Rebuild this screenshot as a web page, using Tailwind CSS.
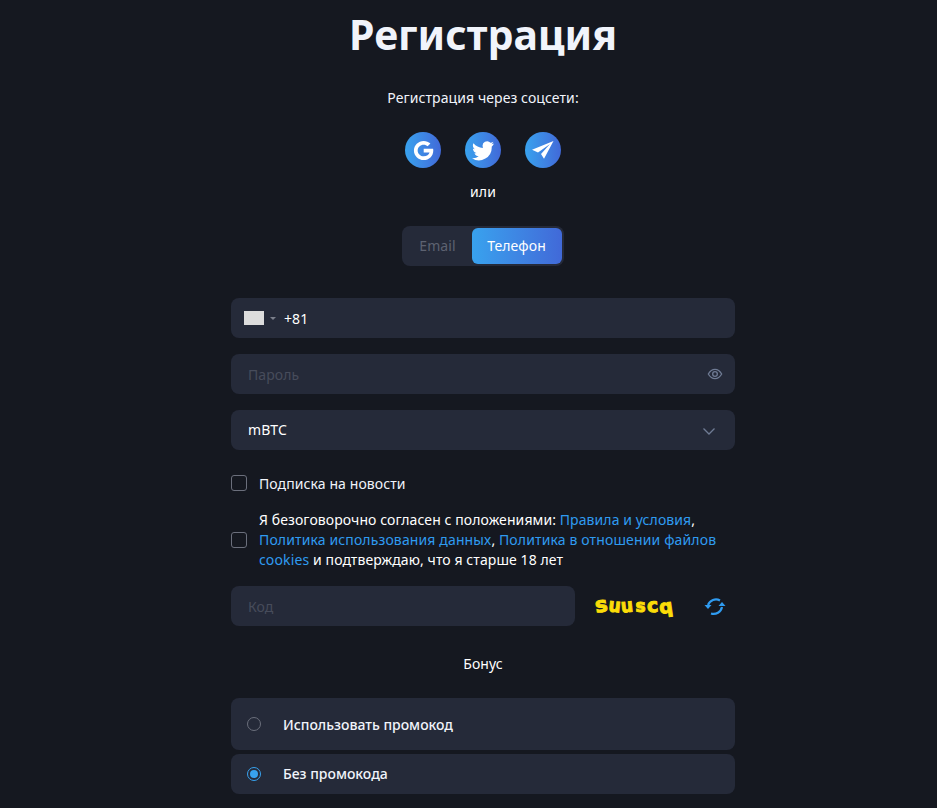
<!DOCTYPE html>
<html lang="ru">
  <head>
    <meta charset="UTF-8" />
    <meta name="viewport" content="width=device-width, initial-scale=1.0" />
    <title>Регистрация</title>
    <script src="https://cdn.jsdelivr.net/npm/@tailwindcss/browser@4"></script>
  </head>
  <body class="bg-[#151820] font-['Noto_Sans',sans-serif] text-[14px] tracking-[0.09px] text-white overflow-hidden h-[808px]">
    <div class="ml-[231px] w-[504px]">
      <!-- Header -->
      <h1 class="h-[70px] flex items-center justify-center text-[41px] tracking-normal font-bold text-[#f1f4fb]">Регистрация</h1>
      <p class="mt-[18px] h-5 leading-5 text-center text-[#f1f4fb]">Регистрация через соцсети:</p>

      <!-- Social -->
      <div class="mt-[24px] flex justify-center gap-6">
        <a class="w-9 h-9 rounded-full bg-gradient-to-r from-[#38a2ee] to-[#4169d8] flex items-center justify-center">
          <svg width="23" height="23" viewBox="0 0 24 24" fill="#fff"><path d="M12.200 10.200v3.900h6.100c-.6 2.400-2.900 4-6.100 4-3.500 0-6.300-2.800-6.300-6.100s2.800-6.100 6.300-6.100c1.600 0 3 .6 4.100 1.600l2.900-2.900C17.300 2.900 14.900 2 12.200 2 6.600 2 2 6.500 2 12s4.600 10 10.200 10c5.600 0 10-3.900 10-10 0-.6-.1-1.200-.2-1.800z"/></svg>
        </a>
        <a class="w-9 h-9 rounded-full bg-gradient-to-r from-[#38a2ee] to-[#4169d8] flex items-center justify-center">
          <svg width="24" height="24" viewBox="0 0 24 24" fill="#fff"><path d="M23 5.500c-.8.400-1.700.600-2.600.700.900-.6 1.600-1.400 2-2.500-.9.500-1.800.900-2.900 1.100A4.500 4.500 0 0 0 11.800 9c0 .4 0 .7.100 1C8.100 9.800 4.800 8 2.500 5.200c-1.200 2-.6 4.600 1.400 6-.7 0-1.400-.2-2-.6 0 2.200 1.500 4.100 3.600 4.500-.7.200-1.400.200-2 .1.600 1.800 2.200 3.100 4.200 3.100A9 9 0 0 1 1 20.200 12.800 12.800 0 0 0 20.700 8.800c.9-.8 1.700-2 2.300-3.300z"/></svg>
        </a>
        <a class="w-9 h-9 rounded-full bg-gradient-to-r from-[#38a2ee] to-[#4169d8]">
          <svg width="36" height="36" viewBox="0 0 36 36" fill="#fff"><path d="M28.500 9 7 17.800l6 2.700 12-8.500-9 10 3 4.700z"/></svg>
        </a>
      </div>
      <p class="mt-[14px] h-5 leading-5 text-center">или</p>

      <!-- Tabs -->
      <div class="mt-[24px] flex justify-center">
        <div class="ml-[-1px] w-[162px] h-10 p-0.5 rounded-lg bg-[#252a39] flex">
          <div class="w-[68px] pb-px flex items-center justify-center text-[#5d6271]">Email</div>
          <div class="w-[90px] pb-px rounded-md bg-gradient-to-r from-[#38a2ee] to-[#4169d8] flex items-center justify-center">Телефон</div>
        </div>
      </div>

      <!-- Form -->
      <div class="mt-8 flex flex-col gap-4">
        <div class="h-10 rounded-lg bg-[#252a39] flex items-center pl-[13px]">
          <span class="w-5 h-[14px] bg-[#dcdcdc]"></span>
          <span class="ml-[6px] border-x-[3px] border-x-transparent border-t-[3px] border-t-[#7b7f8b]"></span>
          <span class="ml-[8px]">+81</span>
        </div>
        <div class="h-10 rounded-lg bg-[#252a39] flex items-center justify-between pl-[17px] pr-[12px]">
          <span class="text-[#474c5b]">Пароль</span>
          <svg width="16" height="16" viewBox="0 0 24 24" fill="none" stroke="#6f7b94" stroke-width="2"><path d="M2 12s4-7 10-7 10 7 10 7-4 7-10 7-10-7-10-7z"/><circle cx="12" cy="12" r="3.500"/></svg>
        </div>
        <div class="h-10 rounded-lg bg-[#252a39] flex items-center justify-between pl-[17px] pr-[20px]">
          <span class="pb-0.5">mBTC</span>
          <svg class="mt-0.5" width="12" height="7" viewBox="0 0 12 7" fill="none" stroke="#6f7b94" stroke-width="1.300"><path d="M.5.500 6 6 11.500.5"/></svg>
        </div>
      </div>

      <!-- Checkboxes -->
      <label class="mt-[23px] h-5 flex items-center gap-3">
        <span class="w-4 h-4 rounded-[3px] border border-[#6b6f7c]"></span>
        <span class="text-[#f1f4fb]">Подписка на новости</span>
      </label>
      <label class="mt-[17px] flex items-center gap-3">
        <span class="shrink-0 w-4 h-4 rounded-[3px] border border-[#6b6f7c]"></span>
        <span class="leading-[20px]">Я безоговорочно согласен с положениями: <a class="text-[#2f9bf0]">Правила и условия</a>, <a class="text-[#2f9bf0] tracking-[0.13px]">Политика использования данных</a>, <a class="text-[#2f9bf0] tracking-[0.14px]">Политика в отношении файлов cookies</a> и подтверждаю, что я старше 18 лет</span>
      </label>

      <!-- Captcha -->
      <div class="mt-4 flex items-center">
        <div class="w-[344px] h-10 rounded-lg bg-[#252a39] flex items-center pl-[17px] text-[#474c5b]">Код</div>
        <span class="ml-[20px] w-[103px] font-['DejaVu_Sans',sans-serif] text-[19px] font-bold tracking-[0.6px] text-[#fbdc08] [-webkit-text-stroke:1px_#fbdc08]">
          <span class="inline-block rotate-[-8deg] text-[21px]">s</span><span class="inline-block rotate-[6deg] scale-x-90">u</span><span class="inline-block rotate-[-6deg] scale-x-90 ml-[-2px]">u</span><span class="inline-block text-[17px] ml-px">s</span><span class="inline-block rotate-[-5deg] ml-px">c</span><span class="inline-block rotate-[-8deg] translate-y-px">q</span>
        </span>
        <svg width="34" height="28" viewBox="0 0 34 28" fill="none" stroke="#2f9bf0" stroke-width="2.200"><path d="M22 8.500A8.500 8.500 0 0 0 10 13"/><path d="M13 21.500A8.500 8.500 0 0 0 24 15"/><path d="M6.500 13h7L10 17z" fill="#2f9bf0" stroke="none"/><path d="M20.500 14h7L24 10z" fill="#2f9bf0" stroke="none"/></svg>
      </div>

      <p class="mt-[28px] h-5 leading-5 text-center">Бонус</p>

      <!-- Bonus -->
      <div class="mt-[24px] flex flex-col gap-1 font-medium tracking-normal text-[#f1f4fb]">
        <div class="h-[52px] rounded-lg bg-[#252a39] flex items-center pl-4">
          <span class="w-[14px] h-[14px] rounded-full border border-[#6b6f7c]"></span>
          <span class="ml-[22px]">Использовать промокод</span>
        </div>
        <div class="h-10 rounded-lg bg-[#252a39] flex items-center pl-4">
          <span class="w-[14px] h-[14px] rounded-full border border-[#38a2ee] flex items-center justify-center"><span class="w-2 h-2 rounded-full bg-[#38a2ee]"></span></span>
          <span class="ml-[22px] pb-px">Без промокода</span>
        </div>
      </div>
    </div>
  </body>
</html>
